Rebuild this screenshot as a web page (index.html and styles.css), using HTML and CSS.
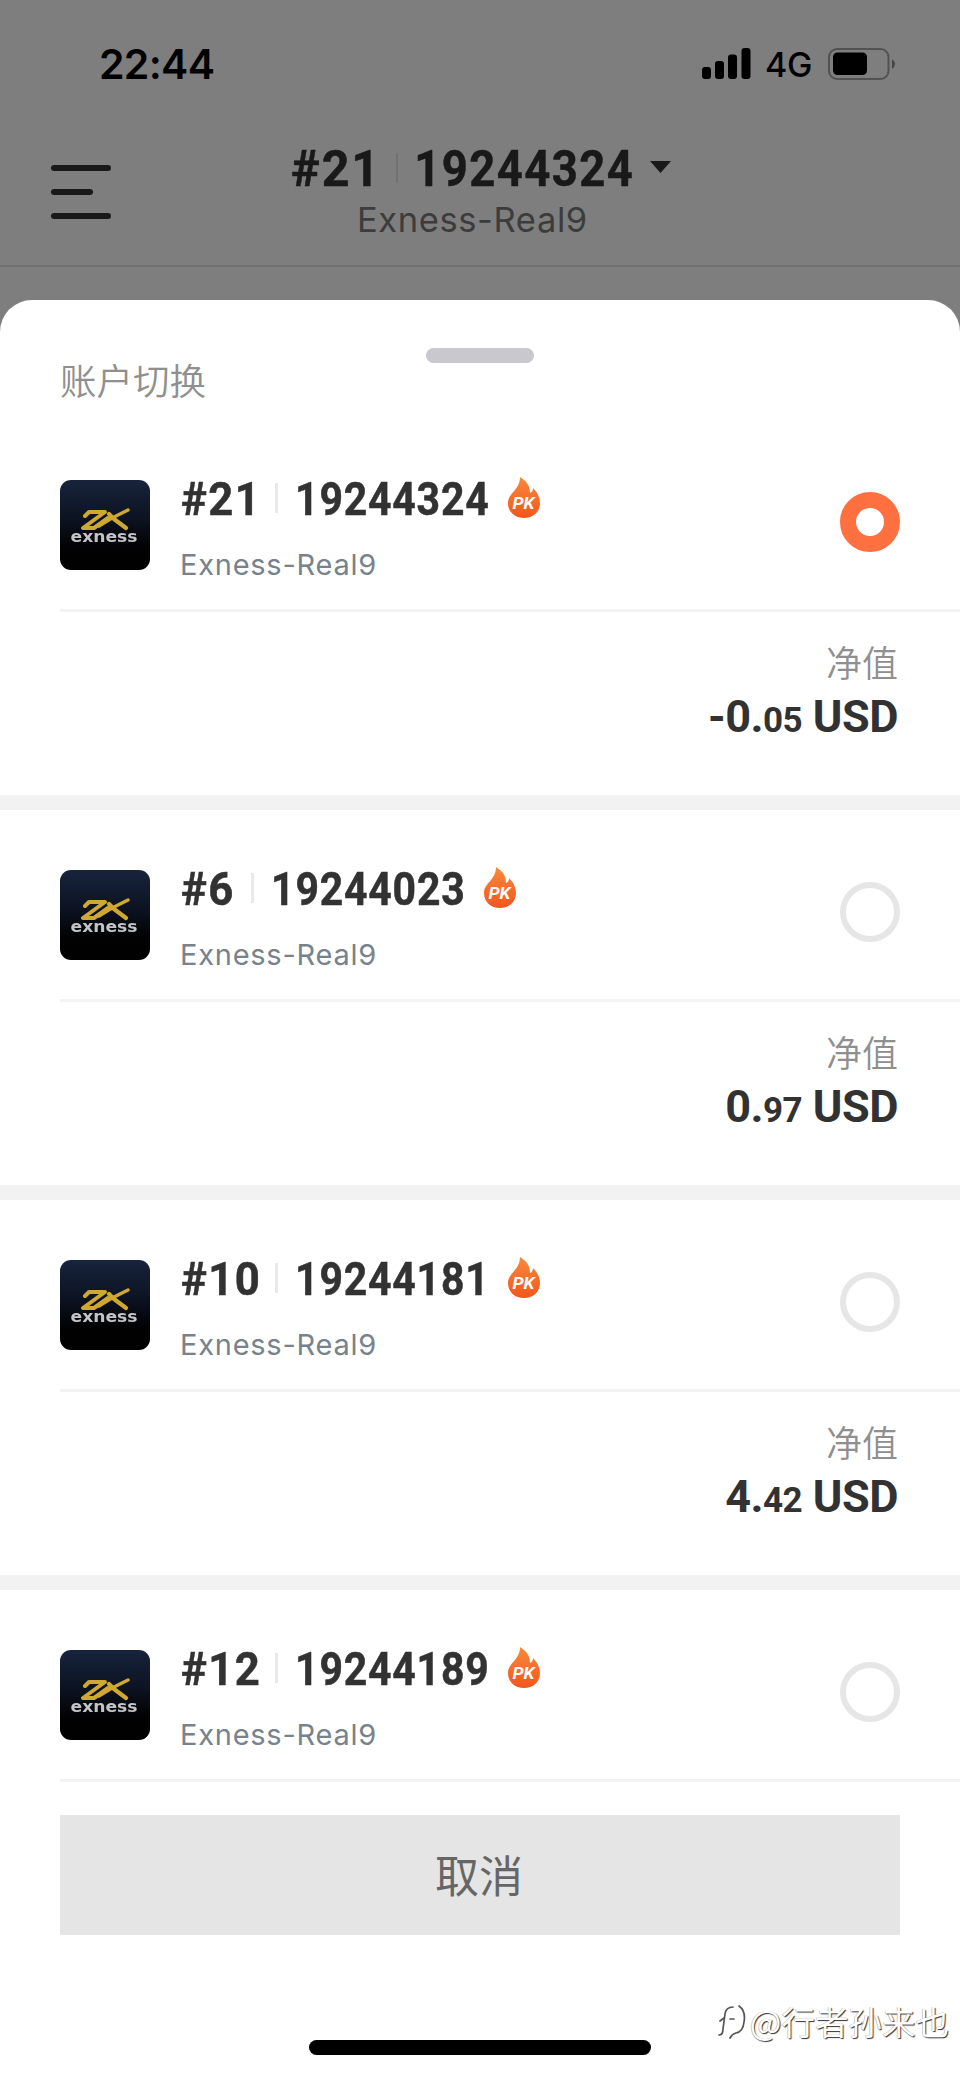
FILE: index.html
```html
<!DOCTYPE html>
<html lang="zh-CN">
<head>
<meta charset="utf-8">
<title>账户切换</title>
<link rel="stylesheet" href="styles.css">
</head>
<body>
<svg class="defs" width="0" height="0" aria-hidden="true">
  <defs>
    <linearGradient id="logo-bg" x1="0" y1="0" x2="0" y2="1">
      <stop offset="0" stop-color="#18243c"/><stop offset=".42" stop-color="#0c1322"/><stop offset=".75" stop-color="#020203"/><stop offset="1" stop-color="#000"/>
    </linearGradient>
    <linearGradient id="flame-bg" x1="0" y1="0" x2="0" y2="1">
      <stop offset="0" stop-color="#f98a3c"/><stop offset="1" stop-color="#f2561d"/>
    </linearGradient>
    <symbol id="logo" viewBox="0 0 90 90">
      <rect width="90" height="90" rx="11" fill="url(#logo-bg)"/>
      <g class="logo-mark" fill="none" stroke="#cfa832" stroke-linecap="round" stroke-linejoin="round">
        <path d="M25 36L29 32H45L23 48H34L48 38" stroke-width="4"/>
        <path d="M39 46L52 38L68 30" stroke-width="3.400"/>
        <path d="M49 34L54 39L66 48" stroke-width="4.200"/>
      </g>
      <text class="logo-word" x="10.500" y="61.500" textLength="67" lengthAdjust="spacingAndGlyphs">exness</text>
    </symbol>
    <symbol id="flame" viewBox="0 0 32 41">
      <path d="M12 0C20 5 22 10 22 16Q25 15 25 11Q32 18 32 26C32 35 25 41 16 41S0 35 0 26C0 16 12 13 12 0Z" fill="url(#flame-bg)"/>
      <text class="pk" x="4.500" y="32" textLength="22" lengthAdjust="spacingAndGlyphs">PK</text>
    </symbol>
  </defs>
</svg>
<div class="screen">
  <div class="status">
    <span class="time">22:44</span>
    <div class="status-right">
      <svg width="49" height="32" viewBox="0 0 49 32"><rect x="0" y="19" width="9" height="12" rx="3"/><rect x="13" y="13" width="9" height="18" rx="3"/><rect x="26" y="6.500" width="9" height="24.500" rx="3"/><rect x="39.500" y="0" width="9" height="31" rx="3"/></svg>
      <span class="network">4G</span>
      <svg width="68" height="32" viewBox="0 0 68 32"><rect x="1" y="1" width="59.500" height="30" rx="8" fill="none" stroke="#525252" stroke-width="2"/><rect x="5" y="4.500" width="34" height="22.500" rx="4.500"/><path d="M64 11Q70 16 64 21Z" fill="#454545"/></svg>
    </div>
  </div>
  <div class="navbar">
    <svg class="menu" width="60" height="54" viewBox="0 0 60 54"><path d="M3 3H57M3 27H39M3 51H57" fill="none" stroke="#191919" stroke-width="6" stroke-linecap="round"/></svg>
    <div class="nav-title">
      <div class="title-line">
        <span class="din title-rank">#21</span><i class="title-sep"></i><span class="din title-num">19244324</span>
        <svg class="caret" width="21" height="12" viewBox="0 0 21 12"><path d="M0 0H21L10.500 12Z" fill="#191919"/></svg>
      </div>
      <div class="title-server">Exness-Real9</div>
    </div>
  </div>
  <div class="sheet">
    <div class="sheet-head"><div class="handle"></div><h1>账户切换</h1></div>
    <div class="card">
      <div class="account">
        <svg class="logo" width="90" height="90"><use href="#logo"/></svg>
        <div class="info"><div class="line"><span class="din rank">#21</span><i class="sep"></i><span class="din num">19244324</span><svg class="flame" width="32" height="41"><use href="#flame"/></svg></div><div class="server">Exness-Real9</div></div>
        <span class="radio on"></span>
      </div>
      <div class="equity"><div class="label">净值</div><div class="amount">-0.<small>05</small> USD</div></div>
    </div>
    <div class="card">
      <div class="account">
        <svg class="logo" width="90" height="90"><use href="#logo"/></svg>
        <div class="info"><div class="line"><span class="din rank rank-short">#6</span><i class="sep"></i><span class="din num">19244023</span><svg class="flame" width="32" height="41"><use href="#flame"/></svg></div><div class="server">Exness-Real9</div></div>
        <span class="radio"></span>
      </div>
      <div class="equity"><div class="label">净值</div><div class="amount">0.<small>97</small> USD</div></div>
    </div>
    <div class="card">
      <div class="account">
        <svg class="logo" width="90" height="90"><use href="#logo"/></svg>
        <div class="info"><div class="line"><span class="din rank">#10</span><i class="sep"></i><span class="din num">19244181</span><svg class="flame" width="32" height="41"><use href="#flame"/></svg></div><div class="server">Exness-Real9</div></div>
        <span class="radio"></span>
      </div>
      <div class="equity"><div class="label">净值</div><div class="amount">4.<small>42</small> USD</div></div>
    </div>
    <div class="card last">
      <div class="account">
        <svg class="logo" width="90" height="90"><use href="#logo"/></svg>
        <div class="info"><div class="line"><span class="din rank">#12</span><i class="sep"></i><span class="din num">19244189</span><svg class="flame" width="32" height="41"><use href="#flame"/></svg></div><div class="server">Exness-Real9</div></div>
        <span class="radio"></span>
      </div>
    </div>
    <button class="cancel">取消</button>
    <div class="home"></div>
  </div>
  <div class="watermark">
    <svg width="36" height="38" viewBox="0 0 30 38" fill="none" stroke-width="1.700" stroke-linecap="round"><path d="M2 33Q6 33 6 27L8 12Q9 5 16 5M3 19L7 16M13 17H17M22 4Q29 9 27 20Q26 30 19 31Q15 32 13 36" stroke="#555"/></svg>
    <span>@行者孙来也</span>
  </div>
</div>
</body>
</html>
```
FILE: styles.css
```css
* { box-sizing: border-box; }
body { margin: 0; font-family: Inter, "Noto Sans CJK SC", sans-serif; }
.defs { position: absolute; }
.screen { position: relative; width: 960px; height: 2079px; overflow: hidden; background: #7e7e7e; }
.status { height: 128px; padding: 0 64px 0 99px; display: flex; justify-content: space-between; align-items: center; color: #000; }
.time { font-size: 41px; font-weight: 600; letter-spacing: -.7px; line-height: 50px; }
.status-right { display: flex; align-items: center; }
.network { width: 77px; padding: 2px 0 0 14px; font-size: 34px; font-weight: 500; line-height: 40px; letter-spacing: -.3px; white-space: nowrap; }
.navbar { height: 139px; padding-left: 51px; display: flex; border-bottom: 2px solid #707070; }
.menu { margin-top: 37px; flex: none; }
.nav-title { margin-left: 180px; padding-top: 16px; }
.din { display: inline-block; font-family: Roboto, sans-serif; font-weight: 700; white-space: nowrap; transform-origin: left center; transform: scaleX(.9); letter-spacing: .9px; -webkit-text-stroke: .5px currentColor; }
.title-line { height: 50px; display: flex; align-items: center; font-size: 50.500px; line-height: 50px; color: #191919; }
.title-rank { width: 105px; letter-spacing: 2px; transform: scaleX(.96); }
.title-sep { width: 2px; height: 30px; margin-top: -3px; background: #717171; }
.title-num { width: 252px; padding-left: 18px; letter-spacing: 1.600px; }
.caret { margin-top: -4px; }
.title-server { padding-left: 66px; margin-top: 6px; font-size: 34.500px; line-height: 40px; color: #3c3c3c; letter-spacing: .6px; white-space: nowrap; }

.sheet { margin-top: 33px; height: 1779px; background: #fff; border-radius: 32px 32px 0 0; }
.sheet-head { height: 120px; padding: 48px 60px 0; }
.handle { width: 108px; height: 15px; margin: 0 auto; border-radius: 8px; background: #c9c8cf; }
h1 { margin: -7px 0 0; font-size: 36.500px; line-height: 48px; font-weight: 350; color: #8f8f8f; font-family: "Noto Sans CJK SC", sans-serif; }
.card { height: 390px; border-bottom: 15px solid #f2f2f2; }
.account { height: 192px; margin-left: 60px; padding: 60px 60px 0 0; display: flex; border-bottom: 3px solid #f3f3f3; }
.logo { flex: none; }
.logo-mark { filter: blur(.6px); }
.logo-word { font: 700 15px "DejaVu Sans", sans-serif; fill: #c4c4c8; filter: blur(.6px); }
.pk { font: italic 700 16px Roboto, sans-serif; fill: #fff; }
.info { margin-left: 31px; flex: 1; }
.line { height: 40px; display: flex; align-items: center; font-size: 45.500px; line-height: 40px; color: #323232; }
.rank { width: 94px; letter-spacing: 1.500px; transform: scaleX(.96); }
.rank-short { width: 70px; }
.sep { width: 3px; height: 30px; margin-top: -4px; background: #e9e9e9; }
.num { width: 216px; padding-left: 19px; }
.flame { flex: none; margin: -6px 0 0 14px; }
.server { margin: 27px 0 0 -1px; font-size: 29px; line-height: 36px; letter-spacing: .75px; color: #77828c; }
.radio { width: 60px; height: 60px; margin-top: 12px; border-radius: 50%; border: 6px solid #e6e6e6; }
.radio.on { border: 16.500px solid #ff7040; }
.equity { padding: 23px 62px 0 0; text-align: right; }
.label { font: 350 36px/52px "Noto Sans CJK SC", sans-serif; color: #8f8f8f; }
.amount { margin-top: 4px; font: 700 45px/52px Roboto, sans-serif; color: #323232; letter-spacing: -.5px; }
.amount small { font-size: 35px; }
.card.last { height: 225px; border: 0; }
.cancel { display: block; width: 840px; height: 120px; margin: 0 auto; padding: 0 2px 2px 0; border: 0; background: #e5e5e5; color: #666; font: 400 44px/118px "Noto Sans CJK SC", sans-serif; }
.home { width: 342px; height: 15px; margin: 105px auto 0; border-radius: 8px; background: #000; }
.watermark { position: absolute; right: 11px; bottom: 33px; display: flex; align-items: center; height: 50px; font: 400 33.500px/50px "Noto Sans CJK SC", sans-serif; color: #fff; text-shadow: 1px 1px 1px #333, -.5px -.5px 0 #aaa; white-space: nowrap; }
```
